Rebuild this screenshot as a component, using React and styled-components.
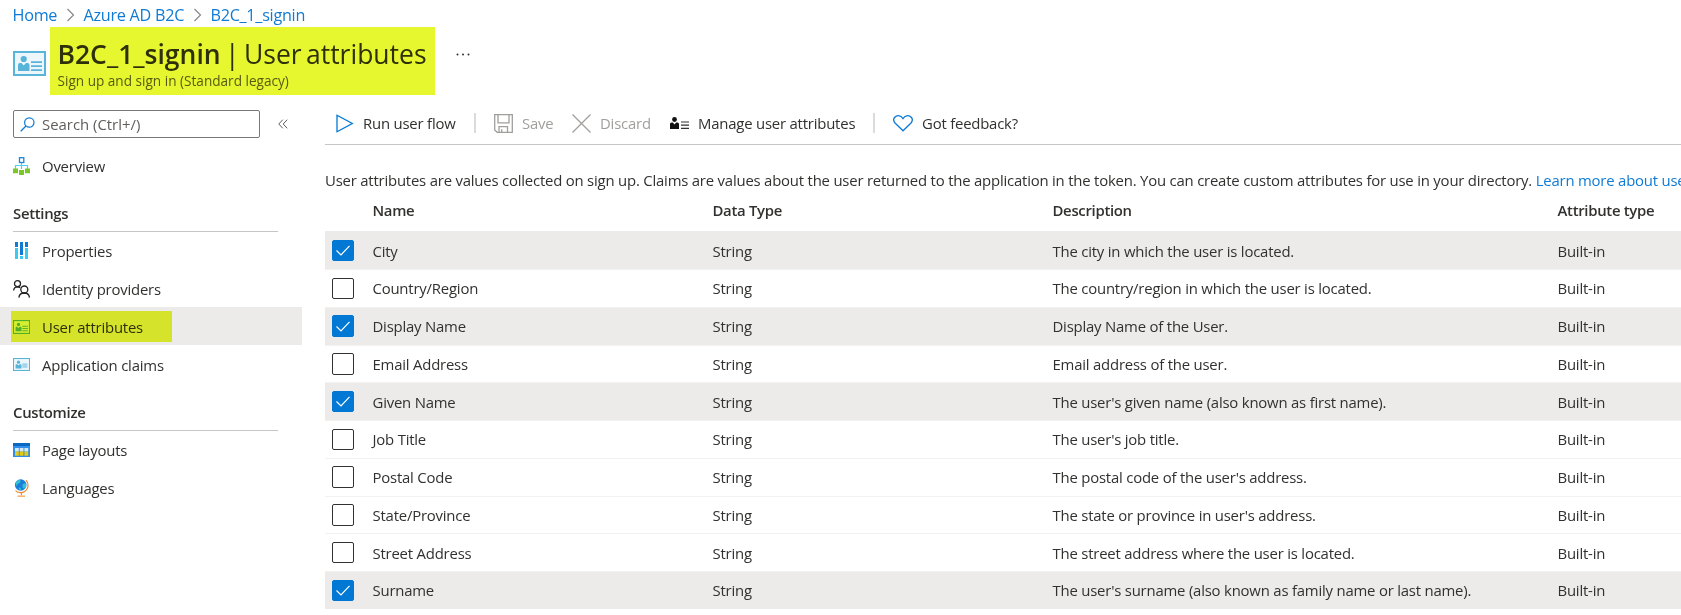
import React from "react";
import styled, { createGlobalStyle, css } from "styled-components";

const Global = createGlobalStyle`
  * { box-sizing: border-box; }
  body { margin: 0; background: #fff; overflow: hidden; }
  svg { display: block; flex: none; }
`;

const Page = styled.div`
  width: 100vw;
  height: 615px;
  overflow: hidden;
  display: flex;
  flex-direction: column;
  color: #323130;
  background: #fff;
  font: 400 14.9px/20px "Open Sans", "Noto Sans", sans-serif;
  letter-spacing: -0.2px;
`;

const Breadcrumb = styled.nav`
  display: flex;
  align-items: center;
  height: 27px;
  padding: 3px 0 0 12.5px;
  gap: 8.7px;
  font-size: 16.2px;
  letter-spacing: -0.27px;
`;

const Link = styled.a`
  color: #0f7bd4;
  white-space: nowrap;
`;

const marker = css`
  position: relative;
  &::after {
    content: "";
    position: absolute;
    inset: 0;
    background: #e6f72f;
    mix-blend-mode: multiply;
    pointer-events: none;
  }
`;

const Header = styled.header`
  display: flex;
  height: 68px;
  padding-left: 13px;
`;

const HeaderIcon = styled.div`
  width: 37px;
  padding-top: 24px;
`;

const TitleBlock = styled.div`
  ${marker}
  width: 385px;
  padding: 9px 0 0 7.5px;
  white-space: nowrap;
`;

const Title = styled.h1`
  margin: 0;
  font-size: 26.5px;
  line-height: 36px;
  font-weight: 400;
  letter-spacing: 0;
  word-spacing: -2.5px;
`;

const TitleStrong = styled.span`
  font-weight: 600;
`;

const Subtitle = styled.div`
  font-size: 13.6px;
  line-height: 18px;
  letter-spacing: 0;
  color: #605e5c;
`;

const More = styled.div`
  padding: 26px 0 0 21px;
`;

const Body = styled.div`
  display: flex;
  flex: 1;
`;

const Sidebar = styled.aside`
  width: 325px;
  flex: none;
  padding-top: 15px;
`;

const SearchRow = styled.div`
  display: flex;
  align-items: center;
  padding-left: 13px;
  margin-bottom: 8px;
  gap: 18px;
`;

const SearchBox = styled.div`
  display: flex;
  align-items: center;
  width: 247px;
  height: 28px;
  padding-left: 6px;
  gap: 7px;
  border: 1px solid #7a7877;
  border-radius: 2px;
  color: #605e5c;
  letter-spacing: 0;
`;

const NavItem = styled.div`
  display: flex;
  align-items: center;
  width: 302px;
  height: 38px;
  padding: 1px 0 0 11px;
  background: ${(p) => (p.$active ? "#edebe9" : "transparent")};
`;

const NavLabel = styled.div`
  display: flex;
  align-items: center;
  gap: 12px;
  width: 161px;
  height: 31px;
  padding-left: 2px;
  white-space: nowrap;
  ${(p) => p.$marked && marker}
`;

const NavText = styled.span`
  padding-top: 1px;
`;

const NavIcon = styled.div`
  width: 17px;
  display: flex;
  justify-content: center;
`;

const NavHeading = styled.div`
  width: 265px;
  height: ${(p) => p.$h}px;
  margin: 0 0 -1px 13px;
  padding-bottom: 8px;
  display: flex;
  align-items: flex-end;
  font-weight: 600;
  letter-spacing: -0.3px;
  border-bottom: 1px solid #c8c6c4;
`;

const Main = styled.main`
  flex: 1;
  min-width: 0;
  overflow: hidden;
`;

const Toolbar = styled.div`
  display: flex;
  align-items: center;
  height: 50px;
  padding: 7px 0 0 11px;
  border-bottom: 1px solid #c8c6c4;
`;

const Command = styled.div`
  display: flex;
  align-items: center;
  gap: ${(p) => p.$gap}px;
  width: ${(p) => p.$w}px;
  color: ${(p) => (p.$disabled ? "#a19f9d" : "#323130")};
  white-space: nowrap;
`;

const Divider = styled.div`
  width: 2px;
  height: 20px;
  margin-right: 18px;
  background: #dddbd9;
`;

const Intro = styled.p`
  margin: 25px 0 0;
  height: 20px;
  white-space: nowrap;
`;

const GridRow = styled.div`
  display: grid;
  grid-template-columns: 47.5px 340px 340px 505px 1fr;
  align-items: center;
  width: 1400px;
  white-space: nowrap;
`;

const HeadRow = styled(GridRow)`
  height: 41.25px;
  padding-bottom: 1px;
  font-weight: 600;
  letter-spacing: -0.3px;
`;

const Row = styled(GridRow)`
  height: 37.75px;
  border-top: 1px solid ${(p) => (p.$first ? "#edebe9" : "#f3f2f1")};
  background: ${(p) => (p.$on ? "#edebe9" : "#fff")};
`;

const Check = styled.div`
  width: 22px;
  height: 21.5px;
  margin-left: 7px;
  display: flex;
  align-items: center;
  justify-content: center;
  border-radius: 2px;
  border: 1px solid ${(p) => (p.$on ? "#0078d4" : "#323130")};
  background: ${(p) => (p.$on ? "#0078d4" : "#fff")};
`;

const IdCard = ({ w, h, block }) => (
  <svg width={w} height={h} viewBox="0 0 33 25" preserveAspectRatio="none">
    <rect x="1" y="1" width="31" height="23" fill="#edf6fb" stroke="#59b4d9" strokeWidth="2" />
    <circle cx="10.7" cy="8" r="3.1" fill="#59b4d9" />
    <path d="M5 20v-6q0-2 2-2h1.500l2.200 2.600L13 12h1.500q2 0 2 2v6z" fill="#59b4d9" />
    {block ? (
      <rect x="18" y="10" width="10" height="9" fill="#a6d5ea" />
    ) : (
      <path d="M18 11.200h11M18 15.200h11M18 19.200h11" stroke="#59b4d9" strokeWidth="1.700" />
    )}
  </svg>
);

const Chevron = () => (
  <svg width="9" height="14" viewBox="0 0 9 14">
    <path d="M1.500 1l6 6-6 6" fill="none" stroke="#8a8886" strokeWidth="1.200" />
  </svg>
);

const OverviewIcon = () => (
  <svg width="17" height="18" viewBox="0 0 17 18">
    <path d="M8.500 6v6M2.500 12V8.500h12V12" fill="none" stroke="#50d0f0" strokeWidth="1.200" />
    <rect x="6.500" y=".7" width="4.300" height="4.800" fill="#fff" stroke="#1b86d8" strokeWidth="1.300" />
    <path d="M0 11.500h5v4.700H0zM12 11.500h5v4.700h-5zM6 13h5v5H6z" fill="#7bc728" />
  </svg>
);

const PropertiesIcon = () => (
  <svg width="13" height="17" viewBox="0 0 13 17">
    <path d="M0 0h3v5H0zM5 0h3v13H5zM10 0h3v5h-3z" fill="#0f7bd4" />
    <path d="M0 6h3v11H0zM5 14h3v3H5zM10 6h3v11h-3z" fill="#3ccbf0" />
  </svg>
);

const PeopleIcon = () => (
  <svg width="17" height="18" viewBox="0 0 17 18" fill="none" stroke="#222" strokeWidth="1.300">
    <circle cx="4.500" cy="3.700" r="3" />
    <path d="M.6 10.500Q1 7 4.500 6.900q1.500 0 2.600.8" />
    <circle cx="11.300" cy="9.500" r="3.500" />
    <path d="M5.900 17.600q.4-4.500 5.400-4.600 4.700.1 5.200 4.600" />
  </svg>
);

const LayoutIcon = () => (
  <svg width="17" height="14" viewBox="0 0 17 14">
    <rect width="17" height="14" fill="#2f8fe8" />
    <rect width="17" height="3" fill="#0a68c4" />
    <path d="M2 5h3.800v3.500H2zM6.700 5h3.800v3.500H6.700zM11.400 5h3.800v3.500h-3.800z" fill="#d5e9f5" />
    <path d="M2 8.500h3.800v4.200H2zM6.700 8.500h3.800v4.200H6.700zM11.400 8.500h3.800v4.200h-3.800z" fill="#e6c912" />
  </svg>
);

const GlobeIcon = () => (
  <svg width="15" height="18" viewBox="0 0 15 18">
    <path d="M12 1.200q3 3.500 1.500 7.800-2.300 5-7.500 4.700-3-.3-4.500-2.200M7.500 13.600V16.500" fill="none" stroke="#f08a2c" strokeWidth="1.200" />
    <path d="M3.500 17.200h7.500" stroke="#f6b26b" strokeWidth="1.500" />
    <circle cx="6.700" cy="6" r="5.800" fill="#1a7fdc" />
    <path d="M2 3q2-2.500 4-2 1.500 1.500-.5 3Q3 4.500 2.500 7 1 5.500 2 3zM8.500 5.500l3-1.500q1.500 3-.5 5.500Q8 10 8.500 5.500zM5 8.500q2.500 0 2 2.700Q4 10.500 5 8.500z" fill="#37c2d0" />
  </svg>
);

const PlayIcon = () => (
  <svg width="18" height="19" viewBox="0 0 18 19">
    <path d="M1 1.300L16.300 9.500 1 17.700z" fill="none" stroke="#0078d4" strokeWidth="1.300" />
  </svg>
);

const SaveIcon = () => (
  <svg width="19" height="19" viewBox="0 0 19 19" fill="none" stroke="#a19f9d" strokeWidth="1.300">
    <path d="M.7.7h17.600v17.600H3.200L.7 15.900zM4 .7v8.200h11V.7M5 18.300v-5.600h8.500v5.600M7.700 18v-2.800" />
  </svg>
);

const CloseIcon = () => (
  <svg width="19" height="19" viewBox="0 0 19 19">
    <path d="M.5.5l18 18M18.500.5l-18 18" stroke="#a19f9d" strokeWidth="1.300" />
  </svg>
);

const ManageIcon = () => (
  <svg width="19" height="13" viewBox="0 0 19 13">
    <circle cx="4.500" cy="2.500" r="2.400" fill="#111" />
    <path d="M0 12V7q0-1.500 1.500-1.500h1.300l1.700 2 1.700-2h1.300Q9 5.500 9 7v5z" fill="#111" />
    <path d="M11 5h8M11 8.200h8M11 11.400h8" stroke="#333" strokeWidth="1.200" />
  </svg>
);

const HeartIcon = () => (
  <svg width="20" height="17" viewBox="0 0 20 17">
    <path d="M10 15.800L2 8Q-.4 5 1.500 2.500 3.500.3 6.300.8 8.500 1.300 10 3.600 11.500 1.300 13.700.8q2.800-.5 4.800 1.700Q20.400 5 18 8z" fill="none" stroke="#0f7bd4" strokeWidth="1.300" />
  </svg>
);

const SearchIcon = () => (
  <svg width="15" height="15" viewBox="0 0 15 15">
    <path d="M.7 14.300L6 9" stroke="#0f7bd4" strokeWidth="1.300" />
    <circle cx="9.300" cy="5.500" r="4.700" fill="none" stroke="#0f7bd4" strokeWidth="1.200" />
  </svg>
);

const CollapseIcon = () => (
  <svg width="10" height="10" viewBox="0 0 10 10">
    <path d="M4.800.7L.8 5l4 4.300M9.200.7L5.200 5l4 4.300" fill="none" stroke="#605e5c" strokeWidth="1" />
  </svg>
);

const MoreIcon = () => (
  <svg width="14" height="3" viewBox="0 0 14 3" fill="#323130">
    <circle cx="1.500" cy="1.500" r="1" />
    <circle cx="7" cy="1.500" r="1" />
    <circle cx="12.500" cy="1.500" r="1" />
  </svg>
);

const Tick = () => (
  <svg width="14" height="11" viewBox="0 0 14 11">
    <path d="M.5 5.500l4.500 4.500L13.500.8" fill="none" stroke="#fff" strokeWidth="1.200" />
  </svg>
);

const rows = [
  ["City", "The city in which the user is located.", true],
  ["Country/Region", "The country/region in which the user is located.", false],
  ["Display Name", "Display Name of the User.", true],
  ["Email Address", "Email address of the user.", false],
  ["Given Name", "The user's given name (also known as first name).", true],
  ["Job Title", "The user's job title.", false],
  ["Postal Code", "The postal code of the user's address.", false],
  ["State/Province", "The state or province in user's address.", false],
  ["Street Address", "The street address where the user is located.", false],
  ["Surname", "The user's surname (also known as family name or last name).", true],
];

const Nav = ({ icon, children, active }) => (
  <NavItem $active={active}>
    <NavLabel $marked={active}>
      <NavIcon>{icon}</NavIcon>
      <NavText>{children}</NavText>
    </NavLabel>
  </NavItem>
);

export default function App() {
  return (
    <Page>
      <Global />
      <Breadcrumb>
        <Link>Home</Link>
        <Chevron />
        <Link>Azure AD B2C</Link>
        <Chevron />
        <Link>B2C_1_signin</Link>
      </Breadcrumb>
      <Header>
        <HeaderIcon><IdCard w={33} h={25} /></HeaderIcon>
        <TitleBlock>
          <Title><TitleStrong>B2C_1_signin</TitleStrong> | User attributes</Title>
          <Subtitle>Sign up and sign in (Standard legacy)</Subtitle>
        </TitleBlock>
        <More><MoreIcon /></More>
      </Header>
      <Body>
        <Sidebar>
          <SearchRow>
            <SearchBox><SearchIcon /><span>Search (Ctrl+/)</span></SearchBox>
            <CollapseIcon />
          </SearchRow>
          <Nav icon={<OverviewIcon />}>Overview</Nav>
          <NavHeading $h={48}>Settings</NavHeading>
          <Nav icon={<PropertiesIcon />}>Properties</Nav>
          <Nav icon={<PeopleIcon />}>Identity providers</Nav>
          <Nav icon={<IdCard w={17} h={14} />} active>User attributes</Nav>
          <Nav icon={<IdCard w={17} h={13} block />}>Application claims</Nav>
          <NavHeading $h={48}>Customize</NavHeading>
          <Nav icon={<LayoutIcon />}>Page layouts</Nav>
          <Nav icon={<GlobeIcon />}>Languages</Nav>
        </Sidebar>
        <Main>
          <Toolbar>
            <Command $gap={9} $w={138}><PlayIcon /><span>Run user flow</span></Command>
            <Divider />
            <Command $gap={9} $w={78} $disabled><SaveIcon /><span>Save</span></Command>
            <Command $gap={9} $w={98} $disabled><CloseIcon /><span>Discard</span></Command>
            <Command $gap={9} $w={203}><ManageIcon /><span>Manage user attributes</span></Command>
            <Divider />
            <Command $gap={9} $w={140}><HeartIcon /><span>Got feedback?</span></Command>
          </Toolbar>
          <Intro>
            User attributes are values collected on sign up. Claims are values about the user returned to the application in the token. You can create custom attributes for use in your directory.{" "}
            <Link>Learn more about user attributes</Link>
          </Intro>
          <HeadRow>
            <span />
            <span>Name</span>
            <span>Data Type</span>
            <span>Description</span>
            <span>Attribute type</span>
          </HeadRow>
          {rows.map(([name, text, on], i) => (
            <Row key={name} $on={on} $first={i === 0}>
              <Check $on={on}>{on && <Tick />}</Check>
              <span>{name}</span>
              <span>String</span>
              <span>{text}</span>
              <span>Built-in</span>
            </Row>
          ))}
        </Main>
      </Body>
    </Page>
  );
}
